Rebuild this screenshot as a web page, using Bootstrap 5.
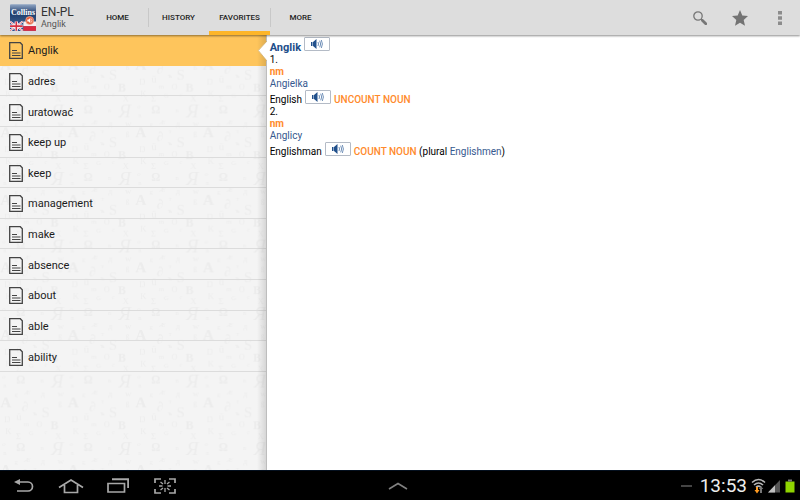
<!DOCTYPE html>
<html lang="en">
<head>
<meta charset="utf-8">
<meta name="viewport" content="width=device-width, initial-scale=1">
<title>EN-PL Anglik</title>
<link href="https://cdn.jsdelivr.net/npm/bootstrap@5.3.0/dist/css/bootstrap.min.css" rel="stylesheet">
<style>
body{font-family:Roboto,"Noto Sans",sans-serif;color:#222;font-size:10px;line-height:12px;background:#fff}
svg{display:block}
.app-bar{height:35px;background:#ddd;box-shadow:0 1px 2px rgba(0,0,0,.45);z-index:3}
.brand-box{width:87px;padding-left:10px;gap:5px}
.dict-name{font-size:12px;line-height:12px;color:#333}
.dict-word{font-size:9px;line-height:12px;color:#555}
.tab-link{width:61px;font-size:8px;font-weight:500;color:#222;text-decoration:none;border-bottom:4px solid transparent;padding-top:4px}
.tab-link.active{border-color:#fdb528}
.tab-sep{width:1px;margin:8px -1px 8px 0;background:#c8c8c8}
.icon-btn{border:0;background:none;padding:0;width:40px}
.side{background:#f4f4f4;border-right:1px solid #bdbdbd}
.side::after{content:"";position:absolute;inset:0 0 0 auto;width:9px;background:linear-gradient(90deg,transparent,rgba(0,0,0,.12));pointer-events:none}
.letters{fill:#ececec;font-family:"Liberation Serif",serif}
.words{min-height:337px;grid-auto-rows:1fr}
.word-link{color:#1c1c1c;text-decoration:none;font-size:11px;line-height:13px;padding:2px 0 0 9px;gap:5px;border-bottom:1px solid #dcdcdc}
.word-link.active{background:#fec55c;border-color:#fec55c}
.notch{top:6px;right:-1px;z-index:2}
.entry{padding:2px 3px;color:#000}
.entry a{color:#36598f;text-decoration:none}
.entry .head-word{font-size:11px;font-weight:700;color:#214e8a;margin:0;line-height:12px}
.gram{color:#ff8a2b;font-weight:500}
.gender{font-weight:700}
.entry-line{min-height:16px;gap:3px}
.entry-line.first{min-height:17px}
.speak{width:26px;height:14px;background:#fff;border:1px solid #b4bbc6;border-radius:1px;padding:0}
.sys-bar{height:30px;background:#000;border-top:1px solid #04101f}
.sys-btn{width:47px;border:0;background:none;padding:0}
.sys-clock{font-size:19px;line-height:28px;color:#eee}
</style>
<script src="https://cdn.jsdelivr.net/npm/bootstrap@5.3.0/dist/js/bootstrap.bundle.min.js"></script>
</head>
<body class="vh-100 d-flex flex-column overflow-hidden">

<header class="app-bar d-flex flex-shrink-0 position-relative">
  <div class="brand-box d-flex align-items-center">
    <svg width="26" height="27" viewBox="0 0 78 80" role="img" aria-label="Collins">
      <defs><linearGradient id="lg" x1="0" y1="0" x2="0" y2="1"><stop offset="0" stop-color="#93a8c6"/><stop offset=".35" stop-color="#1d3c6c"/><stop offset="1" stop-color="#4c719d"/></linearGradient></defs>
      <rect width="78" height="80" rx="3" fill="url(#lg)"/>
      <path d="M0 52h38v28H0z" fill="#25448a"/>
      <path d="M0 52l38 28M38 52L0 80" stroke="#fff" stroke-width="6"/><path d="M0 52l38 28M38 52L0 80" stroke="#d33e50" stroke-width="2"/>
      <path d="M19 52v28M0 66h38" stroke="#fff" stroke-width="10"/><path d="M19 52v28M0 66h38" stroke="#d52f42" stroke-width="5"/>
      <path d="M40 52h38v14H40z" fill="#f7eef0"/><path d="M40 66h38v14H40z" fill="#dc2840"/>
      <circle cx="59" cy="49" r="12" fill="#e65a38" stroke="#f5c0ac" stroke-width="2"/>
      <path d="M52 46h4l5-5v16l-5-5h-4z" fill="#fff"/><path d="M64 43q4 6 0 12" fill="none" stroke="#fff" stroke-width="2"/>
      <text x="39" y="34" text-anchor="middle" font-family="Liberation Serif,serif" font-weight="700" font-size="24" fill="#fff">Collins</text>
    </svg>
    <div><div class="dict-name">EN-PL</div><div class="dict-word">Anglik</div></div>
  </div>
  <nav class="d-flex" aria-label="Sections">
    <a class="tab-link d-flex align-items-center justify-content-center" href="#">HOME</a>
    <span class="tab-sep"></span>
    <a class="tab-link d-flex align-items-center justify-content-center" href="#">HISTORY</a>
    <a class="tab-link active d-flex align-items-center justify-content-center" href="#" aria-current="page">FAVORITES</a>
    <span class="tab-sep"></span>
    <a class="tab-link d-flex align-items-center justify-content-center" href="#">MORE</a>
  </nav>
  <div class="d-flex ms-auto">
    <button class="icon-btn d-flex align-items-center justify-content-center" aria-label="Search">
      <svg width="14" height="14" viewBox="0 0 14 14" fill="none" stroke="#777"><circle cx="5" cy="5" r="4.2" stroke-width="1.3"/><path d="M8 8l1.8 1.8" stroke-width="1.5"/><path d="M9.5 9.5l3.3 3.2" stroke-width="2.8" stroke-linecap="round"/></svg>
    </button>
    <button class="icon-btn d-flex align-items-center justify-content-center" aria-label="Favorite">
      <svg width="16" height="16" viewBox="0 0 16 16" fill="#737373"><path d="M8 0l2.3 5.5 5.7.5-4.3 3.9 1.3 5.9L8 12.7 3 15.8l1.3-5.9L0 6l5.700-.5z"/></svg>
    </button>
    <button class="icon-btn d-flex align-items-center justify-content-center" aria-label="More options">
      <svg width="4" height="14" viewBox="0 0 4 14" fill="#8c8c8c"><path d="M0 0h4v3.5H0zM0 5.2h4v3.5H0zM0 10.4h4v3.5H0z"/></svg>
    </button>
  </div>
</header>

<main class="row g-0 flex-grow-1">
  <aside class="side col-4 position-relative">
    <svg class="position-absolute top-0 start-0 w-100 h-100" aria-hidden="true">
      <defs>
        <pattern id="glyphs" width="202.6" height="202.6" patternUnits="userSpaceOnUse" patternTransform="translate(0 1) scale(.3333)">
          <g class="letters" text-anchor="middle">
            <g font-size="20"><text x="126" y="27">n</text><text x="15" y="41">n</text><text x="48" y="70">g</text><text x="82" y="62" font-style="italic">Æ</text><text x="128" y="68" font-size="24">д</text><text x="182" y="70" font-size="26">w</text><text x="105" y="125" font-weight="700">ъ</text><text x="105" y="90">т</text><text x="180" y="102" font-size="24">ß</text><text x="79" y="157">m</text><text x="94" y="186">G</text><text x="137" y="182">c</text><text x="12" y="14">o</text></g>
            <g font-size="26"><text x="22" y="146">Ŋ</text><text x="57" y="140" font-size="30">ü</text><text x="118" y="160" font-size="24">O</text><text x="25" y="182">K</text><text x="55" y="196">Σ</text><text x="175" y="196">X</text></g>
            <text x="62" y="30" font-size="34" font-weight="700">Ω</text>
            <text x="172" y="42" font-size="56" font-style="italic">Я</text>
            <text x="17" y="100" font-size="46" font-weight="700">A</text>
            <text x="75" y="112" font-size="40">∂</text>
            <text x="137" y="130" font-size="44">S</text>
            <text x="163" y="168" font-size="36" font-weight="700">B</text>
          </g>
        </pattern>
        <symbol id="page" viewBox="0 0 14 17"><path d="M.7.7h10.600l2 2v13.600H.7z" fill="none" stroke="#444" stroke-width="1.3"/><path d="M3 8.500h5M3 11h8.500M3 13.500h8.500" stroke="#444" stroke-width="1.1"/></symbol>
        <symbol id="sound" viewBox="0 0 12 10"><path d="M0 3h1.5v4H0zM2 3l3.5-3v10L2 7z" fill="#21508c"/><path d="M7 3q1 2 0 4M8.700 1.700q2 3.300 0 6.600M10.300 1q2.200 4 0 8" fill="none" stroke="#6f8fb8" stroke-width="1"/></symbol>
      </defs>
      <rect width="100%" height="100%" fill="url(#glyphs)"/>
    </svg>
    <nav class="words d-grid position-relative" aria-label="Favorite words">
      <a class="word-link active d-flex align-items-center" href="#"><svg width="14" height="17"><use href="#page"/></svg>Anglik</a>
      <a class="word-link d-flex align-items-center" href="#"><svg width="14" height="17"><use href="#page"/></svg>adres</a>
      <a class="word-link d-flex align-items-center" href="#"><svg width="14" height="17"><use href="#page"/></svg>uratować</a>
      <a class="word-link d-flex align-items-center" href="#"><svg width="14" height="17"><use href="#page"/></svg>keep up</a>
      <a class="word-link d-flex align-items-center" href="#"><svg width="14" height="17"><use href="#page"/></svg>keep</a>
      <a class="word-link d-flex align-items-center" href="#"><svg width="14" height="17"><use href="#page"/></svg>management</a>
      <a class="word-link d-flex align-items-center" href="#"><svg width="14" height="17"><use href="#page"/></svg>make</a>
      <a class="word-link d-flex align-items-center" href="#"><svg width="14" height="17"><use href="#page"/></svg>absence</a>
      <a class="word-link d-flex align-items-center" href="#"><svg width="14" height="17"><use href="#page"/></svg>about</a>
      <a class="word-link d-flex align-items-center" href="#"><svg width="14" height="17"><use href="#page"/></svg>able</a>
      <a class="word-link d-flex align-items-center" href="#"><svg width="14" height="17"><use href="#page"/></svg>ability</a>
    </nav>
    <svg class="notch position-absolute" width="9" height="20" viewBox="0 0 9 20" aria-hidden="true"><path d="M9 0L0 9.5 9 20z" fill="#fff"/><path d="M9 0L.4 9.5 9 20" fill="none" stroke="#c9a35c" stroke-width=".7"/></svg>
  </aside>

  <article class="entry col-8">
    <div class="entry-line first d-flex align-items-end">
      <h1 class="head-word">Anglik</h1>
      <button class="speak d-flex align-items-center justify-content-center align-self-start" aria-label="Listen to Anglik"><svg width="12" height="10"><use href="#sound"/></svg></button>
    </div>
    <div>1.</div>
    <div class="gram gender">nm</div>
    <div><a href="#">Angielka</a></div>
    <div class="entry-line d-flex align-items-end">
      <span>English</span>
      <button class="speak d-flex align-items-center justify-content-center align-self-start" aria-label="Listen to English"><svg width="12" height="10"><use href="#sound"/></svg></button>
      <span class="gram">UNCOUNT NOUN</span>
    </div>
    <div>2.</div>
    <div class="gram gender">nm</div>
    <div><a href="#">Anglicy</a></div>
    <div class="entry-line d-flex align-items-end">
      <span>Englishman</span>
      <button class="speak d-flex align-items-center justify-content-center align-self-start" aria-label="Listen to Englishman"><svg width="12" height="10"><use href="#sound"/></svg></button>
      <span><span class="gram">COUNT NOUN</span> (plural <a href="#">Englishmen</a>)</span>
    </div>
  </article>
</main>

<footer class="sys-bar row g-0 flex-shrink-0">
  <div class="col d-flex">
    <button class="sys-btn d-flex align-items-center justify-content-center" aria-label="Back"><svg width="20" height="14" viewBox="0 0 20 14"><path d="M5 3h9a4.500 4.500 0 0 1 0 9H3" fill="none" stroke="#a8a8a8" stroke-width="1.7"/><path d="M0 3l6-3v6z" fill="#a8a8a8"/></svg></button>
    <button class="sys-btn d-flex align-items-center justify-content-center" aria-label="Home"><svg width="26" height="16" viewBox="0 0 26 16" fill="none" stroke="#a8a8a8" stroke-width="1.7"><path d="M1 9.500L13 2l12 7.500M6.500 7v7.500h13V7"/></svg></button>
    <button class="sys-btn d-flex align-items-center justify-content-center" aria-label="Recent apps"><svg width="22" height="15" viewBox="0 0 22 15" fill="none" stroke="#a8a8a8"><path d="M1 5.500h16.500V14H1z" stroke-width="1.7"/><path d="M5 1.300h16.200V10" stroke-width="2"/></svg></button>
    <button class="sys-btn d-flex align-items-center justify-content-center" aria-label="Screenshot"><svg width="22" height="16" viewBox="0 0 22 16" fill="none" stroke="#a8a8a8"><path d="M1 5V1h6M15 1h6v4M21 11v4h-6M7 15H1v-4" stroke-width="1.7"/><path d="M11 2v4M11 10v4M5 8h3.500M13.500 8H17M6.500 4l2.500 2M15.500 4L13 6M6.500 12L9 10M15.500 12L13 10" stroke-width="1.300"/></svg></button>
  </div>
  <button class="sys-btn d-flex align-items-center justify-content-center" aria-label="Expand"><svg width="20" height="8" viewBox="0 0 20 8" fill="none" stroke="#808080" stroke-width="1.6"><path d="M1 7l9-5.500L19 7"/></svg></button>
  <div class="col d-flex align-items-center justify-content-end pe-1">
    <svg class="me-2" width="11" height="2" aria-hidden="true"><path d="M0 1h11" stroke="#555" stroke-width="1.600"/></svg>
    <time class="sys-clock me-1">13:53</time>
    <svg width="45" height="16" viewBox="0 0 45 16" role="img" aria-label="Wi-Fi, signal and battery">
      <g fill="none" stroke="#b8b8b8" stroke-width="1.600"><path d="M1 4.500q6.500-6 13 0M3 7q4.500-4 9 0M5 9.300q2.500-2.200 5 0"/></g>
      <path d="M5 9h2v3h1.500L6 15.500 3.500 12H5z" fill="#ff9a1f"/><path d="M9 15v-4H7.700L10 8l2.300 3H11v4z" fill="#777"/>
      <path d="M29 2v12.500H17z" fill="#555"/><path d="M24 7.200v7.300h-7z" fill="#c0c0c0"/>
      <path d="M34.500 3.500h9v11h-9z" fill="#8fd400"/><path d="M37 1.500h4v2h-4z" fill="#777"/>
    </svg>
  </div>
</footer>
</body>
</html>
